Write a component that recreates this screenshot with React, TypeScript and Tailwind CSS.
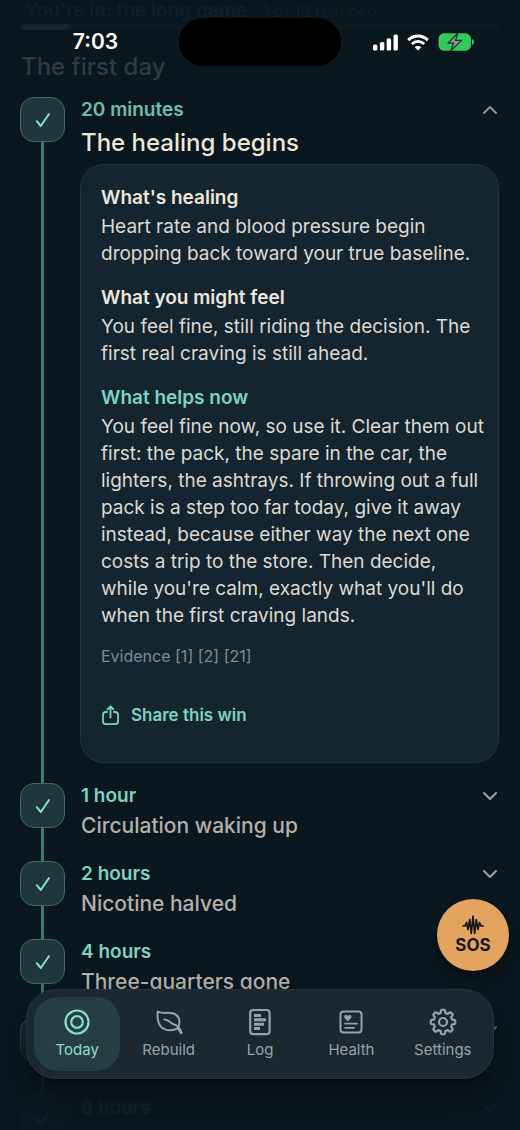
import type { ReactNode } from "react";

type Milestone = { id: string; time?: string; title?: string };

const upcoming: Milestone[] = [
  { id: "h1", time: "1 hour", title: "Circulation waking up" },
  { id: "h2", time: "2 hours", title: "Nicotine halved" },
  { id: "h4", time: "4 hours", title: "Three-quarters gone" },
  { id: "next" },
  { id: "h8", time: "8 hours" },
];

function Chevron({ up = false }: { up?: boolean }) {
  return (
    <svg width="16" height="10" viewBox="0 0 16 10" fill="none" stroke="currentColor" strokeWidth="2" strokeLinecap="round" strokeLinejoin="round" aria-hidden="true">
      <path d={up ? "M2 8l6-6 6 6" : "M2 2l6 6 6-6"} />
    </svg>
  );
}

function Marker() {
  return (
    <div className="flex w-[45px] shrink-0 flex-col items-center">
      <div className="flex size-[45px] shrink-0 items-center justify-center rounded-[14px] border border-[#3b6c68] bg-[#1f363b]">
        <svg width="16" height="16" viewBox="0 0 16 16" fill="none" stroke="#86dfcd" strokeWidth="2" strokeLinecap="round" strokeLinejoin="round" aria-hidden="true">
          <path d="M1.8 9.2L5.8 14L14 2" />
        </svg>
      </div>
      <div className="w-[3px] grow bg-[#42766f]" />
    </div>
  );
}

function Section({ heading, accent = false, children }: { heading: string; accent?: boolean; children: ReactNode }) {
  return (
    <section>
      <h3 className={accent ? "mb-0.5 text-[19px] leading-[27px] font-semibold text-[#7dd3c0]" : "mb-0.5 text-[19px] leading-[27px] font-semibold text-[#ece7dc]"}>
        {heading}
      </h3>
      <p className="text-[19px] leading-[27px] text-[#dcd9d1]">{children}</p>
    </section>
  );
}

function StatusBar() {
  return (
    <div className="absolute inset-x-0 top-0 z-20 grid grid-cols-[1fr_162px_1fr] items-center pt-[18px] text-white">
      <span className="pl-3 text-center text-[21px] leading-[48px] font-semibold">7:03</span>
      <div className="h-12 rounded-full bg-black" />
      <div className="flex items-center gap-[9px] pl-[31px]">
        <svg width="26" height="17" viewBox="0 0 26 17" fill="currentColor" aria-hidden="true">
          <rect x="1" y="10.5" width="4.4" height="6" rx="1.6" />
          <rect x="7.9" y="8" width="4.4" height="8.5" rx="1.6" />
          <rect x="14.7" y="4.3" width="4.4" height="12.2" rx="1.6" />
          <rect x="21.5" y="0.5" width="4.4" height="16" rx="1.6" />
        </svg>
        <svg width="22" height="17" viewBox="0 0 22 17" fill="none" stroke="currentColor" strokeWidth="2.9" aria-hidden="true">
          <path d="M1.2 6.1C6.8.7 15.2.7 20.8 6.1" />
          <path d="M4.8 10C8.5 6.7 13.5 6.7 17.2 10" />
          <path d="M11 16.4L7.7 13.2C9.6 11.6 12.4 11.6 14.3 13.2Z" fill="currentColor" stroke="none" />
        </svg>
        <svg width="36" height="18" viewBox="0 0 36 18" aria-hidden="true">
          <rect x="0.5" y="0.3" width="32.5" height="17.4" rx="5.4" fill="#35c759" />
          <path d="M34 6v6c1.2-.3 2-1.6 2-3s-.8-2.7-2-3z" fill="#35c759" />
          <path d="M19.7 .2L10 10.2H15.5L12.8 17.8L23.6 7.4H17.6Z" fill="#8b9198" stroke="#12351f" strokeWidth="1.2" strokeLinejoin="round" />
        </svg>
      </div>
    </div>
  );
}

const iconProps = {
  width: 28,
  height: 28,
  viewBox: "0 0 28 28",
  fill: "none",
  stroke: "currentColor",
  strokeWidth: 2,
  strokeLinecap: "round" as const,
  strokeLinejoin: "round" as const,
  "aria-hidden": true,
};

const gearPath = (() => {
  const points: string[] = [];
  const teeth = 8;
  for (let i = 0; i < teeth; i++) {
    const base = (i / teeth) * Math.PI * 2 - Math.PI / 2;
    for (const [offset, radius] of [[-0.25, 9.4], [-0.19, 11.4], [-0.11, 12.3], [0.11, 12.3], [0.19, 11.4], [0.25, 9.4]]) {
      points.push(`${(14 + radius * Math.cos(base + offset)).toFixed(2)} ${(14 + radius * Math.sin(base + offset)).toFixed(2)}`);
    }
  }
  return `M${points.join("L")}Z`;
})();

const tabs: { label: string; icon: ReactNode }[] = [
  {
    label: "Today",
    icon: (
      <svg {...iconProps} strokeWidth={2.2}>
        <circle cx="14" cy="14" r="11.5" />
        <circle cx="14" cy="14" r="5.8" />
      </svg>
    ),
  },
  {
    label: "Rebuild",
    icon: (
      <svg {...iconProps}>
        <path d="M2.7 3.6C2.2 9 2.6 15.5 6.5 19.3C11 23.3 18.3 23 22.4 20.4C25.5 16 25.3 9.6 20.8 6.6C15.3 3 8.5 6.6 2.7 3.6Z" />
        <path d="M9.5 11.5C13.5 11.2 14.8 15 18.6 16.2C22.5 17.3 25 20 26.3 24.8" />
        <path d="M23.6 20.6L26 24.6" strokeWidth="3" />
      </svg>
    ),
  },
  {
    label: "Log",
    icon: (
      <svg {...iconProps} strokeWidth={2.2}>
        <rect x="4.2" y="2" width="19.4" height="24.2" rx="3" />
        <path d="M8 7.4h7M8 11.8h12M8 16.2h10M8 20.6h6" strokeWidth="3" strokeLinecap="butt" />
      </svg>
    ),
  },
  {
    label: "Health",
    icon: (
      <svg {...iconProps}>
        <rect x="3.5" y="3.5" width="21" height="21" rx="3" />
        <path d="M8 15.6h12M8 19.8h9" strokeWidth="1.7" />
        <path d="M10.8 13.2C8.2 11.2 7.2 10.1 7.2 8.8C7.2 6.8 9.8 6.3 10.8 8C11.8 6.3 14.4 6.8 14.4 8.8C14.4 10.1 13.4 11.2 10.8 13.2Z" fill="currentColor" stroke="none" />
      </svg>
    ),
  },
  {
    label: "Settings",
    icon: (
      <svg {...iconProps} strokeWidth={2.2}>
        <path d={gearPath} />
        <circle cx="14" cy="14" r="4" />
      </svg>
    ),
  },
];

export default function App() {
  return (
    <div className="relative h-screen overflow-hidden bg-[#0b171e] font-['Inter','Liberation_Sans',sans-serif]">
      <StatusBar />

      <main className="pr-[21px] pl-5">
        <div className="flex items-baseline gap-4 pl-[5px] text-[#111f27]">
          <h2 className="text-[19px] leading-[22px] font-semibold">You're in: the long game</h2>
          <span className="text-[16px] leading-[22px]">1 of 10 reached</span>
        </div>
        <div className="mt-0.5 ml-px h-1.5 rounded-full bg-[#0e1b23]">
          <div className="h-full w-[10%] rounded-full bg-[#14262c]" />
        </div>
        <h2 className="mt-5 mb-[13px] pl-px text-[24px] leading-[34px] font-medium text-[#303a40]">The first day</h2>

        <ol>
          <li className="flex gap-4">
            <Marker />
            <article className="min-w-0 grow pb-5">
              <button type="button" aria-expanded="true" className="flex w-full items-start justify-between pb-1 text-left">
                <span>
                  <span className="block text-[19px] leading-[26px] font-semibold text-[#6fbcad]">20 minutes</span>
                  <span className="block pt-0.5 text-[24px] leading-[35px] font-medium text-[#ece7dc]">The healing begins</span>
                </span>
                <span className="mt-2 mr-px text-[#8496a1]">
                  <Chevron up />
                </span>
              </button>
              <div className="-ml-px rounded-3xl border border-[#20363f] bg-[#142530] pt-[19px] pr-3 pb-[22px] pl-5">
                <div className="flex flex-col gap-[17px]">
                  <Section heading="What's healing">Heart rate and blood pressure begin dropping back toward your true baseline.</Section>
                  <Section heading="What you might feel">You feel fine, still riding the decision. The first real craving is still ahead.</Section>
                  <Section heading="What helps now" accent>
                    You feel fine now, so use it. Clear them out first: the pack, the spare in the car, the lighters, the ashtrays. If throwing out a full pack is a step too far today, give it away instead, because either way the next one costs a trip to the store. Then decide, while you're calm, exactly what you'll do when the first craving lands.
                  </Section>
                  <p className="text-[16px] leading-5 text-[#7d8b94]">Evidence [1] [2] [21]</p>
                </div>
                <button type="button" className="mt-[26px] flex h-12 items-center gap-[11px] text-[17px] font-semibold text-[#7dd3c0]">
                  <svg width="19" height="22" viewBox="0 0 19 22" fill="none" stroke="currentColor" strokeWidth="1.8" strokeLinecap="round" strokeLinejoin="round" aria-hidden="true">
                    <path d="M6 7H4.7Q2 7 2 9.7V16.6Q2 19.2 4.7 19.2H14.3Q17 19.2 17 16.6V9.7Q17 7 14.3 7H13" />
                    <path d="M9.5 12.5V1.5M6.5 4.3L9.5 1.3L12.5 4.3" />
                  </svg>
                  Share this win
                </button>
              </div>
            </article>
          </li>

          {upcoming.map((item) => (
            <li key={item.id} className="flex min-h-[78px] gap-4">
              <Marker />
              <button type="button" aria-label={item.time ?? "Milestone"} className="flex grow items-start justify-between text-left">
                <span>
                  <span className="block text-[19px] leading-[26px] font-semibold text-[#7dd3c0]">{item.time}</span>
                  <span className="block pt-0.5 text-[21px] leading-[30px] font-medium text-[#b3b0ab]">{item.title}</span>
                </span>
                <span className="mt-2 mr-px text-[#94a5af]">
                  <Chevron />
                </span>
              </button>
            </li>
          ))}
        </ol>
      </main>

      <div className="pointer-events-none absolute inset-x-0 bottom-0 h-[150px] bg-linear-to-b from-[#0b171e]/0 via-[#0b171e]/75 to-[#0b171e]/95 to-75%" />

      <button type="button" className="absolute right-[11px] bottom-[159px] flex size-[72px] flex-col items-center justify-center rounded-full bg-[#e3a45f] text-[#15191b] shadow-lg shadow-black/30">
        <svg width="22" height="20" viewBox="0 0 22 20" fill="none" stroke="currentColor" strokeWidth="1.7" strokeLinecap="round" strokeLinejoin="round" aria-hidden="true">
          <path d="M1 11H3L4.5 7.5L6 14.5L7.7 4.5L9.3 18.5L11 1L12.7 18.5L14.3 4.5L16 14.5L17.5 7.5L19 11H21" />
        </svg>
        <span className="text-[17px] leading-5 font-bold">SOS</span>
      </button>

      <nav className="absolute inset-x-[26px] bottom-[51px] flex gap-[5px] rounded-[30px] border border-[#20353f] bg-[#1b282f] p-[7px] shadow-xl shadow-black/30">
        {tabs.map((tab, i) => (
          <a
            key={tab.label}
            href={`#${tab.label.toLowerCase()}`}
            aria-current={i === 0 ? "page" : undefined}
            className={
              i === 0
                ? "flex h-[74px] flex-1 flex-col items-center justify-center gap-1 rounded-3xl bg-[#263d42] text-[#86dfcd]"
                : "flex h-[74px] flex-1 flex-col items-center justify-center gap-1 rounded-3xl text-[#94a3ab]"
            }
          >
            {tab.icon}
            <span className="text-[15px] leading-5">{tab.label}</span>
          </a>
        ))}
      </nav>
    </div>
  );
}
